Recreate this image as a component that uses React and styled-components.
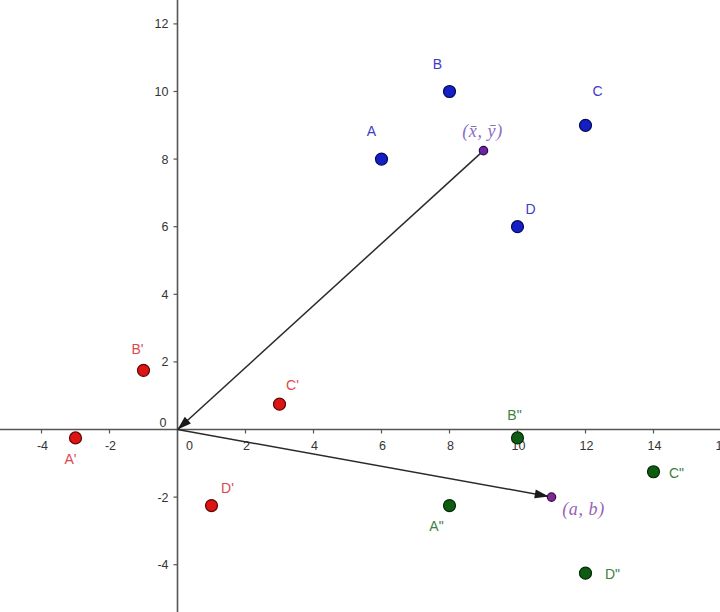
import React from 'react';
import styled, { createGlobalStyle } from 'styled-components';

const ORIGIN_X = 177.5;
const ORIGIN_Y = 429.5;
const UNIT_X = 34;
const UNIT_Y = 33.8;

const px = v => ORIGIN_X + v * UNIT_X;
const py = v => ORIGIN_Y - v * UNIT_Y;

const X_TICKS = [-4, -2, 2, 4, 6, 8, 10, 12, 14, 16];
const Y_TICKS = [12, 10, 8, 6, 4, 2, -2, -4];

const PALETTE = {
  blue: { fill: '#1420c4', stroke: '#06095c', text: '#3c3cc8' },
  red: { fill: '#dc1414', stroke: '#5e0606', text: '#d84a4e' },
  green: { fill: '#0e5c12', stroke: '#032a05', text: '#3f8040' },
};

const POINTS = [
  { name: 'A', x: 6, y: 8, color: 'blue', dx: -10, dy: -28 },
  { name: 'B', x: 8, y: 10, color: 'blue', dx: -12, dy: -28 },
  { name: 'C', x: 12, y: 9, color: 'blue', dx: 12, dy: -34 },
  { name: 'D', x: 10, y: 6, color: 'blue', dx: 13, dy: -18 },
  { name: "A'", x: -3, y: -0.25, color: 'red', dx: -5, dy: 21 },
  { name: "B'", x: -1, y: 1.75, color: 'red', dx: -6, dy: -21 },
  { name: "C'", x: 3, y: 0.75, color: 'red', dx: 13, dy: -19 },
  { name: "D'", x: 1, y: -2.25, color: 'red', dx: 16, dy: -18 },
  { name: 'A"', x: 8, y: -2.25, color: 'green', dx: -13, dy: 20 },
  { name: 'B"', x: 10, y: -0.25, color: 'green', dx: -3, dy: -23 },
  { name: 'C"', x: 14, y: -1.25, color: 'green', dx: 23, dy: 1 },
  { name: 'D"', x: 12, y: -4.25, color: 'green', dx: 27, dy: 1 },
];

const CENTROID = { x: 9, y: 8.25 };
const SHIFT = { x: 11, y: -2 };

const GlobalStyle = createGlobalStyle`
  html, body {
    margin: 0;
    padding: 0;
    background: #ffffff;
  }
`;

const Page = styled.div`
  width: 720px;
  height: 612px;
  overflow: hidden;
  background: #ffffff;
`;

const Canvas = styled.svg`
  display: block;
  width: 720px;
  height: 612px;
`;

const AxisLine = styled.line`
  stroke: #555555;
  stroke-width: 1.6;
`;

const TickMark = styled.line`
  stroke: #555555;
  stroke-width: 1.2;
`;

const TickLabel = styled.text`
  font-family: 'Liberation Sans', Arial, sans-serif;
  font-size: 12.5px;
  fill: #333333;
  text-anchor: ${p => p.$anchor || 'middle'};
`;

const VectorLine = styled.line`
  stroke: #2a2a2a;
  stroke-width: 1.5;
`;

const Dot = styled.circle`
  fill: ${p => p.$fill};
  stroke: ${p => p.$stroke};
  stroke-width: 1.2;
`;

const PointLabel = styled.text`
  font-family: 'Liberation Sans', Arial, sans-serif;
  font-size: 14px;
  fill: ${p => p.$color};
  text-anchor: middle;
`;

const MathLabel = styled.text`
  font-family: 'Liberation Serif', 'DejaVu Serif', serif;
  font-style: italic;
  font-size: 18px;
  fill: ${p => p.$color || '#9a62b4'};
  text-anchor: middle;
  letter-spacing: 0.6px;
`;

const ArrowHead = styled.path`
  fill: #1a1a1a;
`;

function Axes() {
  return (
    <g>
      <AxisLine x1={0} y1={ORIGIN_Y} x2={720} y2={ORIGIN_Y} />
      <AxisLine x1={ORIGIN_X} y1={0} x2={ORIGIN_X} y2={612} />
      {X_TICKS.map(t => (
        <g key={`x${t}`}>
          <TickMark x1={px(t)} y1={ORIGIN_Y} x2={px(t)} y2={ORIGIN_Y + 4} />
          <TickLabel x={px(t) + 1} y={ORIGIN_Y + 20}>{t}</TickLabel>
        </g>
      ))}
      {Y_TICKS.map(t => (
        <g key={`y${t}`}>
          <TickMark x1={ORIGIN_X - 4} y1={py(t)} x2={ORIGIN_X} y2={py(t)} />
          <TickLabel x={ORIGIN_X - 9} y={py(t) + 4.5} $anchor="end">{t}</TickLabel>
        </g>
      ))}
      <TickLabel x={ORIGIN_X - 11} y={ORIGIN_Y - 3} $anchor="end">0</TickLabel>
      <TickLabel x={ORIGIN_X + 12} y={ORIGIN_Y + 20}>0</TickLabel>
    </g>
  );
}

function Vector({ from, to }) {
  const x1 = px(from.x);
  const y1 = py(from.y);
  const x2 = px(to.x);
  const y2 = py(to.y);
  const angle = (Math.atan2(y2 - y1, x2 - x1) * 180) / Math.PI;
  return (
    <g>
      <VectorLine x1={x1} y1={y1} x2={x2} y2={y2} />
      <ArrowHead d="M0,0 L-14,-4.5 L-14,4.5 Z" transform={`translate(${x2} ${y2}) rotate(${angle})`} />
    </g>
  );
}

function Point({ point }) {
  const c = PALETTE[point.color];
  const x = px(point.x);
  const y = py(point.y);
  return (
    <g>
      <Dot cx={x} cy={y} r={6} $fill={c.fill} $stroke={c.stroke} />
      <PointLabel x={x + point.dx} y={y + point.dy + 5} $color={c.text}>{point.name}</PointLabel>
    </g>
  );
}

export default function App() {
  const shiftTip = { x: SHIFT.x - 0.08, y: SHIFT.y + 0.02 };
  return (
    <Page>
      <GlobalStyle />
      <Canvas viewBox="0 0 720 612">
        <Axes />
        <Vector from={CENTROID} to={{ x: 0, y: 0 }} />
        <Vector from={{ x: 0, y: 0 }} to={shiftTip} />
        {POINTS.map(p => <Point key={p.name} point={p} />)}
        <Dot cx={px(CENTROID.x)} cy={py(CENTROID.y)} r={4.2} $fill="#6a24a4" $stroke="#30084a" />
        <Dot cx={px(SHIFT.x)} cy={py(SHIFT.y)} r={4.2} $fill="#7b2a92" $stroke="#3a0a48" />
        <MathLabel x={px(CENTROID.x) - 1} y={py(CENTROID.y) - 14} $color="#8c6cc4">(x̄, ȳ)</MathLabel>
        <MathLabel x={px(SHIFT.x) + 32} y={py(SHIFT.y) + 18}>(a, b)</MathLabel>
      </Canvas>
    </Page>
  );
}
